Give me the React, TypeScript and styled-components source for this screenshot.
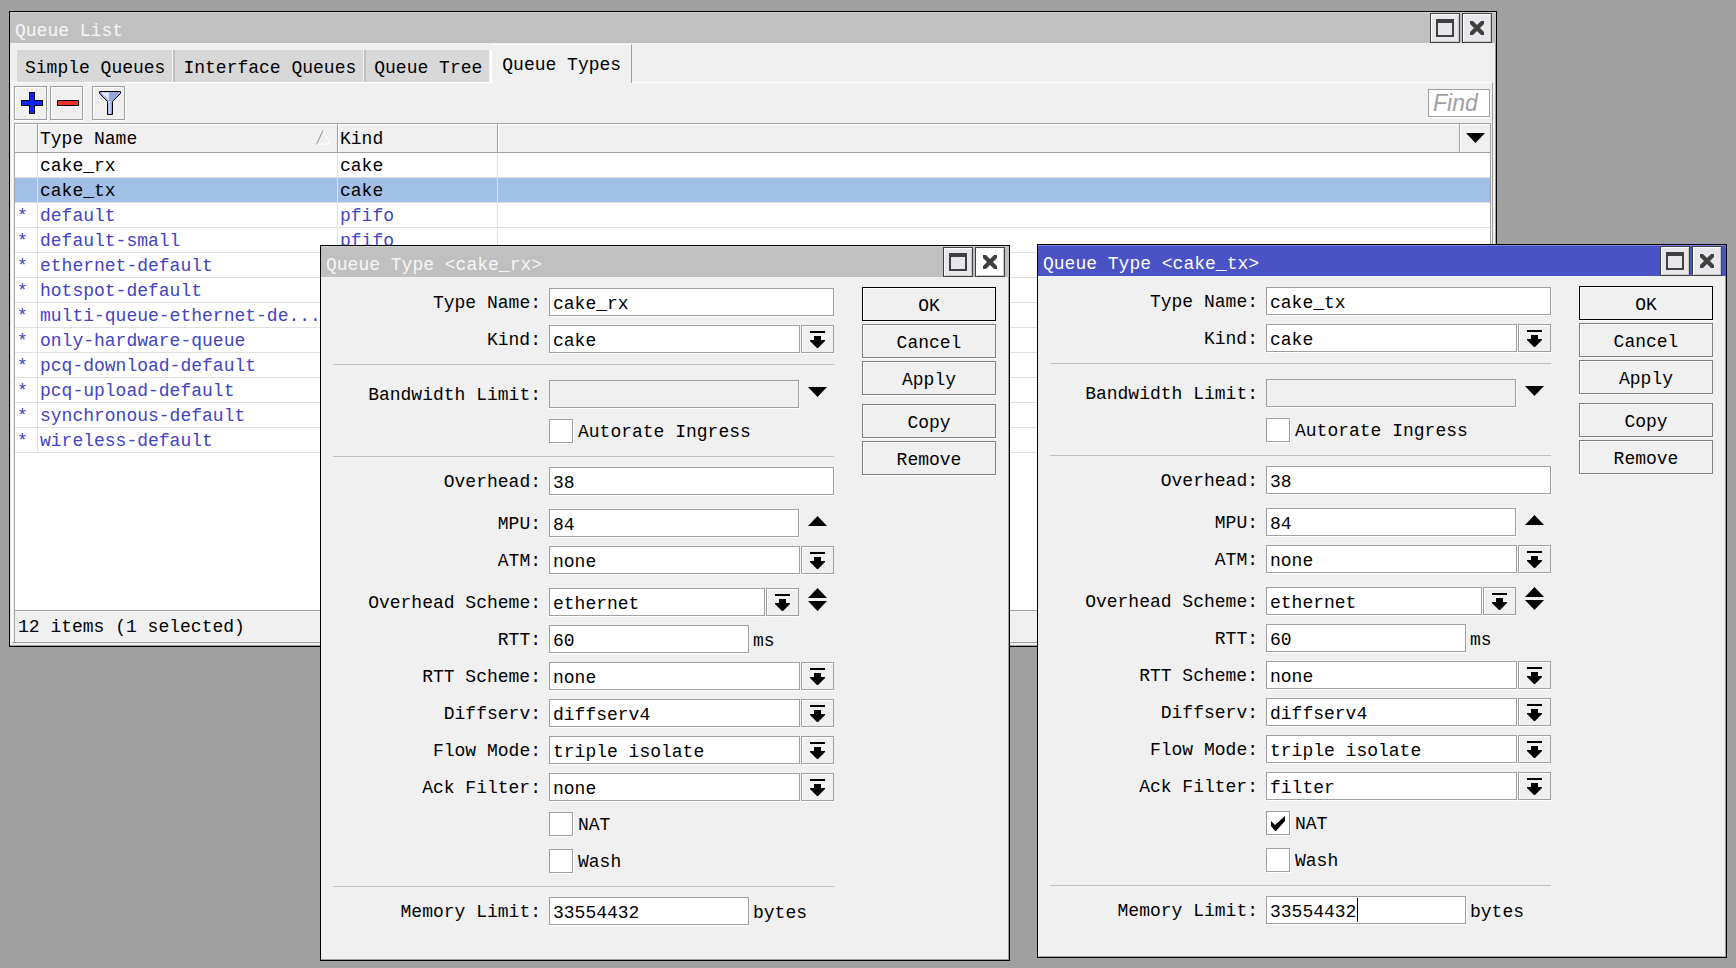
import React, { useId } from "react";
import styled, { createGlobalStyle, css } from "styled-components";

const mono = '"Liberation Mono", "Noto Sans CJK SC", monospace';

const GlobalStyle = createGlobalStyle`
  *, *::before, *::after { box-sizing: border-box; }
  html, body, #root { height: 100%; }
  body {
    margin: 0;
    background: #a0a0a0;
    color: #000;
    font: 18px/24px ${mono};
    overflow: hidden;
  }
  button, input, select { font: inherit; color: inherit; border-radius: 0; margin: 0; }
`;

const Desktop = styled.main`
  position: relative;
  min-height: 100vh;
  overflow: hidden;
  background: #a0a0a0;
`;

const WindowFrame = styled.section<{ $x: number; $y: number; $w: number; $h: number }>`
  position: absolute;
  left: ${(p) => p.$x}px;
  top: ${(p) => p.$y}px;
  width: ${(p) => p.$w}px;
  height: ${(p) => p.$h}px;
  display: flex;
  flex-direction: column;
  border: 1px solid #000;
  background: #f0f0f0;
  box-shadow: inset -1px -1px 0 #a0a0a0;
`;

const TitleBar = styled.header<{ $active?: boolean }>`
  display: flex;
  flex: none;
  align-items: center;
  gap: 2px;
  height: 31px;
  padding: 1px 4px 0 5px;
  color: ${(p) => (p.$active ? "#fff" : "#f6f6f6")};
  background: ${(p) => (p.$active ? "#4a53c6" : "#c0c0c0")};
  box-shadow: inset 0 1px 0 ${(p) => (p.$active ? "#7c83d8" : "#d0d0d0")};
`;

const Title = styled.h2`
  flex: 1;
  margin: 0;
  padding-top: 5px;
  font-size: 18px;
  font-weight: 400;
  line-height: 24px;
`;

const TitleButton = styled.button<{ $hot?: boolean }>`
  display: grid;
  place-items: center;
  width: 30px;
  height: 30px;
  padding: 0;
  border: 1px solid #404040;
  background: ${(p) => (p.$hot ? "#fff" : "#e8e6ea")};
  box-shadow: inset 1px 1px 0 #fff, inset -1px -1px 0 #c8c8c8;
`;

const Window = (p: {
  title: string; x: number; y: number; w: number; h: number;
  active?: boolean; closeHot?: boolean; children: React.ReactNode;
}) => (
  <WindowFrame $x={p.x} $y={p.y} $w={p.w} $h={p.h} aria-label={p.title}>
    <TitleBar $active={p.active}>
      <Title>{p.title}</Title>
      <TitleButton type="button" aria-label="Maximize">
        <svg width="18" height="18" viewBox="0 0 18 18">
          <path d="M0 0H18V18H0ZM2 4V16H16V4Z" fill="#404040" fillRule="evenodd" />
        </svg>
      </TitleButton>
      <TitleButton type="button" aria-label="Close" $hot={p.closeHot}>
        <svg width="14" height="14" viewBox="0 0 14 14">
          <path d="M0 0H3L7 4L11 0H14V3L10 7L14 11V14H11L7 10L3 14H0V11L4 7L0 3Z" fill="#404040" />
        </svg>
      </TitleButton>
    </TitleBar>
    {p.children}
  </WindowFrame>
);

/* ---------- queue list ---------- */

const Tabs = styled.nav`
  display: flex;
  flex: none;
  align-items: flex-end;
  height: 39px;
  padding-left: 7px;
`;

const Tab = styled.button<{ $active?: boolean }>`
  height: 32px;
  padding: 3px 8px 0;
  border: 0;
  border-right: 2px solid #c0c0c0;
  background: #d8d8d8;
  white-space: nowrap;
  box-shadow: inset -1px 0 0 #f4f4f4;
  &:nth-child(3) { border-right-color: #fff; }
  ${(p) =>
    p.$active &&
    css`
      z-index: 1;
      height: 39px;
      margin-bottom: -1px;
      padding: 1px 10px 0;
      border-top: 1px solid #fff;
      border-right: 1px solid #a0a0a0;
      background: #f0f0f0;
      box-shadow: none;
    `}
`;

const TabPanel = styled.div`
  display: flex;
  flex: 1;
  flex-direction: column;
  min-height: 0;
  margin: 0 3px 3px 2px;
  padding: 0 1px;
  border: 1px solid #a0a0a0;
  border-top-color: #fff;
  border-left-color: #fff;
`;

const Toolbar = styled.div`
  display: flex;
  flex: none;
  align-items: center;
  gap: 3px;
  height: 40px;
`;

const ToolButton = styled.button<{ $apart?: boolean }>`
  display: grid;
  place-items: center;
  width: 33px;
  height: 34px;
  margin-left: ${(p) => (p.$apart ? 6 : 0)}px;
  padding: 0 0 0 2px;
  border: 1px solid #a0a0a0;
  background: #f0f0f0;
  box-shadow: 1px 1px 0 #fff, inset 1px 1px 0 #fff;
`;

const FindBox = styled.input`
  width: 62px;
  height: 28px;
  margin: 0 1px 0 auto;
  padding: 0 4px;
  border: 1px solid #a0a0a0;
  background: #fff;
  box-shadow: 0 1px 0 #fff;
  font: italic 23px/26px "Liberation Sans", Arial, sans-serif;
  &::placeholder { color: #a0a0a0; opacity: 1; }
`;

const TableArea = styled.div`
  flex: 1;
  min-height: 0;
  overflow: hidden;
  border: 1px solid #a0a0a0;
  background: #fff;
`;

const Table = styled.table`
  width: 100%;
  table-layout: fixed;
  border-collapse: separate;
  border-spacing: 0;
`;

const HeadCell = styled.th<{ $w?: number }>`
  width: ${(p) => (p.$w ? `${p.$w}px` : "auto")};
  height: 29px;
  padding: 0 0 0 2px;
  border-right: 1px solid #a0a0a0;
  border-bottom: 1px solid #a0a0a0;
  background: #f0f0f0;
  box-shadow: inset 1px 1px 0 #fff;
  font-weight: 400;
  text-align: left;
  &:last-child { padding: 0; border-right: 0; }
`;

const HeadInner = styled.div`
  display: flex;
  align-items: center;
  justify-content: space-between;
  padding: 3px 6px 0 0;
  line-height: 25px;
`;

const SortMark = styled.svg`
  margin-bottom: 4px;
`;

const ColumnMenu = styled.button`
  display: grid;
  place-items: center;
  width: 100%;
  height: 28px;
  padding: 0;
  border: 0;
  background: transparent;
`;

const Row = styled.tr<{ $selected?: boolean; $builtin?: boolean }>`
  color: ${(p) => (p.$builtin ? "#4343c3" : "#000")};
  background: ${(p) => (p.$selected ? "#a2bfe8" : "#fff")};
`;

const Cell = styled.td`
  height: 25px;
  padding: 2px 0 0 2px;
  overflow: hidden;
  border-right: 1px solid #e0e0e0;
  border-bottom: 1px solid #e0e0e0;
  line-height: 22px;
  text-overflow: ellipsis;
  white-space: nowrap;
  &:nth-child(n + 4) { border-right: 0; }
`;

const StatusBar = styled.footer`
  flex: none;
  height: 31px;
  padding: 4px 3px 0;
  border-left: 1px solid #a0a0a0;
`;

const DownTriangle = () => (
  <svg width="19" height="10" viewBox="0 0 19 10" aria-hidden="true">
    <path d="M0 0H19L9.500 10Z" fill="#000" />
  </svg>
);
const UpTriangle = () => (
  <svg width="19" height="10" viewBox="0 0 19 10" aria-hidden="true">
    <path d="M0 10H19L9.500 0Z" fill="#000" />
  </svg>
);

const queueTypes: { name: string; kind: string; builtin?: boolean; selected?: boolean }[] = [
  { name: "cake_rx", kind: "cake" },
  { name: "cake_tx", kind: "cake", selected: true },
  { name: "default", kind: "pfifo", builtin: true },
  { name: "default-small", kind: "pfifo", builtin: true },
  { name: "ethernet-default", kind: "", builtin: true },
  { name: "hotspot-default", kind: "", builtin: true },
  { name: "multi-queue-ethernet-de...", kind: "", builtin: true },
  { name: "only-hardware-queue", kind: "", builtin: true },
  { name: "pcq-download-default", kind: "", builtin: true },
  { name: "pcq-upload-default", kind: "", builtin: true },
  { name: "synchronous-default", kind: "", builtin: true },
  { name: "wireless-default", kind: "", builtin: true },
];

const QueueList = () => (
  <Window title="Queue List" x={9} y={11} w={1488} h={636}>
    <Tabs>
      <Tab type="button">Simple Queues</Tab>
      <Tab type="button">Interface Queues</Tab>
      <Tab type="button">Queue Tree</Tab>
      <Tab type="button" $active>Queue Types</Tab>
    </Tabs>
    <TabPanel>
      <Toolbar>
        <ToolButton type="button" aria-label="Add">
          <svg width="22" height="22" viewBox="0 0 22 22">
            <path d="M8.500 0.500H13.500V8.500H21.500V13.500H13.500V21.500H8.500V13.500H0.500V8.500H8.500Z" fill="#0a24fb" stroke="#000" />
          </svg>
        </ToolButton>
        <ToolButton type="button" aria-label="Remove">
          <svg width="22" height="6" viewBox="0 0 22 6">
            <path d="M0.500 0.500H21.500V5.500H0.500Z" fill="#ee3124" stroke="#000" />
          </svg>
        </ToolButton>
        <ToolButton type="button" aria-label="Filter" $apart>
          <svg width="22" height="24" viewBox="0 0 22 24">
            <path d="M0.500 0.500H21.500V2.500L13.500 10.500V23.500H8.500V10.500L0.500 2.500Z" fill="#98a8dc" stroke="#000" />
            <path d="M2 1.500H10L9.500 9.500Z" fill="#e4e9fa" />
            <path d="M9.500 10H11.500V23H9.500Z" fill="#ccd6f6" />
          </svg>
        </ToolButton>
        <FindBox placeholder="Find" aria-label="Find" />
      </Toolbar>
      <TableArea>
        <Table>
          <thead>
            <tr>
              <HeadCell $w={23} aria-label="Flags" />
              <HeadCell $w={300}>
                <HeadInner>
                  Type Name
                  <SortMark width="15" height="15" viewBox="0 0 15 15" aria-hidden="true">
                    <path d="M7.500 0.500L14 14H0.500" fill="none" stroke="#fff" />
                    <path d="M0.500 14.500L7 0.500" fill="none" stroke="#909090" />
                  </SortMark>
                </HeadInner>
              </HeadCell>
              <HeadCell $w={160}><HeadInner>Kind</HeadInner></HeadCell>
              <HeadCell />
              <HeadCell $w={30}>
                <ColumnMenu type="button" aria-label="Columns"><DownTriangle /></ColumnMenu>
              </HeadCell>
            </tr>
          </thead>
          <tbody>
            {queueTypes.map((q) => (
              <Row key={q.name} $selected={q.selected} $builtin={q.builtin}>
                <Cell>{q.builtin ? "*" : ""}</Cell>
                <Cell>{q.name}</Cell>
                <Cell>{q.kind}</Cell>
                <Cell />
                <Cell />
              </Row>
            ))}
          </tbody>
        </Table>
      </TableArea>
      <StatusBar>12 items (1 selected)</StatusBar>
    </TabPanel>
  </Window>
);

/* ---------- queue type dialog ---------- */

const DialogBody = styled.form`
  display: flex;
  gap: 28px;
  padding: 11px 13px 0 12px;
`;

const Fields = styled.div`
  display: flex;
  flex: 1;
  flex-direction: column;
  gap: 9px;
`;

const FieldRow = styled.div<{ $optional?: boolean }>`
  display: grid;
  grid-template-columns: 208px 1fr;
  column-gap: 8px;
  height: 28px;
  margin-top: ${(p) => (p.$optional ? 5 : 0)}px;
`;

const Label = styled.label`
  padding-top: 3px;
  text-align: right;
  white-space: nowrap;
`;

const Control = styled.div`
  position: relative;
  display: flex;
  grid-column: 2;
  gap: 1px;
`;

const box = css`
  height: 28px;
  min-width: 0;
  padding: 3px 3px 0;
  border: 1px solid #a0a0a0;
  background: #fff;
  box-shadow: 0 1px 0 #fff, 1px 0 0 #f8f8f8;
  outline: 0;
`;

const TextBox = styled.input<{ $short?: boolean }>`
  ${box}
  flex: ${(p) => (p.$short ? "0 0 200px" : "1")};
  &:disabled { background: #f0f0f0; }
`;

const ComboBox = styled.select`
  ${box}
  appearance: none;
  flex: 1;
`;

const DropButton = styled.button`
  display: grid;
  place-items: center;
  flex: 0 0 33px;
  height: 28px;
  padding: 0;
  border: 1px solid #a0a0a0;
  background: #f0f0f0;
  box-shadow: 0 1px 0 #fff, inset 1px 1px 0 #fff;
`;

const Togglers = styled.div`
  display: flex;
  flex: 0 0 34px;
  flex-direction: column;
  align-items: center;
  gap: 3px;
`;

const Toggle = styled.button<{ $lead?: boolean }>`
  display: block;
  height: 10px;
  margin-top: ${(p) => (p.$lead ? 7 : 0)}px;
  padding: 0;
  border: 0;
  background: transparent;
  line-height: 0;
`;

const Unit = styled.span`
  padding: 4px 0 0 3px;
`;

const CheckLabel = styled.label`
  display: flex;
  align-items: center;
  gap: 5px;
`;

const CheckWrap = styled.span`
  position: relative;
  display: block;
  height: 24px;
  svg { position: absolute; left: 5px; top: 5px; pointer-events: none; }
`;

const CheckBox = styled.input`
  appearance: none;
  display: block;
  width: 24px;
  height: 24px;
  border: 1px solid #a0a0a0;
  background: #fff;
  box-shadow: 1px 1px 0 #fff;
`;

const CheckText = styled.span`
  padding-top: 2px;
`;

const Separator = styled.hr`
  width: 100%;
  height: 1px;
  margin: 2px 0 1px;
  border: 0;
  background: #c0c0c0;
`;

const Actions = styled.div`
  display: flex;
  flex: 0 0 134px;
  flex-direction: column;
  gap: 3px;
  margin-top: -1px;
`;

const ActionButton = styled.button<{ $primary?: boolean; $apart?: boolean }>`
  height: 34px;
  margin-top: ${(p) => (p.$apart ? 6 : 0)}px;
  padding: 3px 0 0;
  border: 1px solid ${(p) => (p.$primary ? "#000" : "#808080")};
  background: #f0f0f0;
  box-shadow: 0 1px 0 #fff, inset 1px 1px 0 #fff;
`;

const Caret = styled.i`
  position: absolute;
  top: 2px;
  left: calc(8ch + 5px);
  width: 1px;
  height: 24px;
  background: #000;
`;

type ToggleKind = "down" | "up" | "both";

const TogglePart = ({ kind, name }: { kind: ToggleKind; name: string }) => (
  <Togglers>
    {kind === "down" ? (
      <Toggle type="button" $lead aria-label={`Show ${name}`}><DownTriangle /></Toggle>
    ) : (
      <Toggle type="button" $lead={kind === "up"} aria-label={`Hide ${name}`}><UpTriangle /></Toggle>
    )}
    {kind === "both" && (
      <Toggle type="button" aria-label={`More ${name}`}><DownTriangle /></Toggle>
    )}
  </Togglers>
);

const TextField = (p: {
  label: string; value?: string; unit?: string; toggle?: ToggleKind;
  disabled?: boolean; caret?: boolean;
}) => {
  const id = useId();
  return (
    <FieldRow $optional={!!p.toggle}>
      <Label htmlFor={id}>{p.label}:</Label>
      <Control>
        <TextBox id={id} defaultValue={p.value} disabled={p.disabled} $short={!!p.unit} />
        {p.caret && <Caret />}
        {p.unit && <Unit>{p.unit}</Unit>}
        {p.toggle && <TogglePart kind={p.toggle} name={p.label} />}
      </Control>
    </FieldRow>
  );
};

const ComboField = (p: { label: string; value: string; toggle?: ToggleKind }) => {
  const id = useId();
  return (
    <FieldRow $optional={!!p.toggle}>
      <Label htmlFor={id}>{p.label}:</Label>
      <Control>
        <ComboBox id={id} defaultValue={p.value}><option>{p.value}</option></ComboBox>
        <DropButton type="button" aria-label={`Open ${p.label}`}>
          <svg width="15" height="17" viewBox="0 0 15 17">
            <path d="M0 0H15V2H0ZM4 5H11V9H15V10L8 17H7L0 10V9H4Z" fill="#000" />
          </svg>
        </DropButton>
        {p.toggle && <TogglePart kind={p.toggle} name={p.label} />}
      </Control>
    </FieldRow>
  );
};

const CheckField = ({ label, checked }: { label: string; checked?: boolean }) => (
  <FieldRow>
    <Control>
      <CheckLabel>
        <CheckWrap>
          <CheckBox type="checkbox" defaultChecked={checked} />
          {checked && (
            <svg width="14" height="15" viewBox="0 0 14 15">
              <path d="M0 5L4 9L14 0V5L5 15H4L0 10Z" fill="#000" />
            </svg>
          )}
        </CheckWrap>
        <CheckText>{label}</CheckText>
      </CheckLabel>
    </Control>
  </FieldRow>
);

const QueueTypeDialog = (p: {
  name: string; ackFilter: string; nat?: boolean; x: number; y: number; h: number;
  active?: boolean; closeHot?: boolean;
}) => (
  <Window title={`Queue Type <${p.name}>`} x={p.x} y={p.y} w={690} h={p.h} active={p.active} closeHot={p.closeHot}>
    <DialogBody onSubmit={(e) => e.preventDefault()}>
      <Fields>
        <TextField label="Type Name" value={p.name} />
        <ComboField label="Kind" value="cake" />
        <Separator />
        <TextField label="Bandwidth Limit" toggle="down" disabled />
        <CheckField label="Autorate Ingress" />
        <Separator />
        <TextField label="Overhead" value="38" />
        <TextField label="MPU" value="84" toggle="up" />
        <ComboField label="ATM" value="none" />
        <ComboField label="Overhead Scheme" value="ethernet" toggle="both" />
        <TextField label="RTT" value="60" unit="ms" />
        <ComboField label="RTT Scheme" value="none" />
        <ComboField label="Diffserv" value="diffserv4" />
        <ComboField label="Flow Mode" value="triple isolate" />
        <ComboField label="Ack Filter" value={p.ackFilter} />
        <CheckField label="NAT" checked={p.nat} />
        <CheckField label="Wash" />
        <Separator />
        <TextField label="Memory Limit" value="33554432" unit="bytes" caret={p.active} />
      </Fields>
      <Actions>
        <ActionButton type="submit" $primary>OK</ActionButton>
        <ActionButton type="button">Cancel</ActionButton>
        <ActionButton type="button">Apply</ActionButton>
        <ActionButton type="button" $apart>Copy</ActionButton>
        <ActionButton type="button">Remove</ActionButton>
      </Actions>
    </DialogBody>
  </Window>
);

export default function App() {
  return (
    <>
      <GlobalStyle />
      <Desktop>
        <QueueList />
        <QueueTypeDialog name="cake_rx" ackFilter="none" x={320} y={245} h={716} closeHot />
        <QueueTypeDialog name="cake_tx" ackFilter="filter" nat x={1037} y={244} h={714} active />
      </Desktop>
    </>
  );
}
